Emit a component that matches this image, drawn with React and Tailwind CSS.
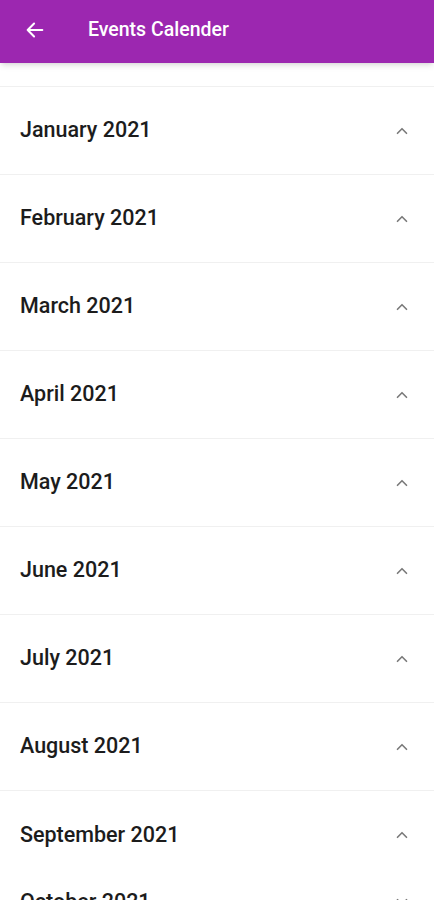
import React from "react";

const months = [
  "January 2021",
  "February 2021",
  "March 2021",
  "April 2021",
  "May 2021",
  "June 2021",
  "July 2021",
  "August 2021",
  "September 2021",
];

const Chevron = ({ down }) => (
  <svg width="18" height="18" viewBox="0 0 24 24" fill="none" stroke="#7a7a7a" strokeWidth="2.2" strokeLinecap="round" strokeLinejoin="round">
    <path d={down ? "M6 9l6 6 6-6" : "M6 15l6-6 6 6"} />
  </svg>
);

const App = () => {
  return (
    <div className="w-[434px] h-[900px] overflow-hidden bg-white" style={{ fontFamily: "Roboto, 'Liberation Sans', sans-serif" }}>
      {/* Top bar */}
      <div className="h-[63px] bg-[#9c27b0] flex items-center shadow-md relative z-10">
        <svg className="ml-[24px] -mt-[4px]" width="22" height="22" viewBox="0 0 24 24" fill="none" stroke="#fff" strokeWidth="2.2" strokeLinecap="round" strokeLinejoin="round">
          <path d="M20 12H4M11 5l-7 7 7 7" />
        </svg>
        <span className="ml-[42px] -mt-[4px] text-white text-[19.5px] font-medium">Events Calender</span>
      </div>

      <div className="h-[24px] border-b border-[#f0f0f0]" />

      {months.map((m, i) => (
        <div
          key={m}
          className={`h-[88px] flex items-center justify-between px-5 ${
            i === months.length - 1 ? "" : "border-b border-[#f0f0f0]"
          }`}
        >
          <span className="text-[21.5px] font-medium text-[#1c1c1c]">{m}</span>
          <span className="mr-[3px]">
            <Chevron />
          </span>
        </div>
      ))}

      {/* expanded month */}
      <div className="flex items-center justify-between px-5 pt-[7px]">
        <span className="text-[21.5px] font-medium text-[#1c1c1c]">October 2021</span>
        <span className="mr-[3px]">
          <Chevron down />
        </span>
      </div>
    </div>
  );
};

export default App;
